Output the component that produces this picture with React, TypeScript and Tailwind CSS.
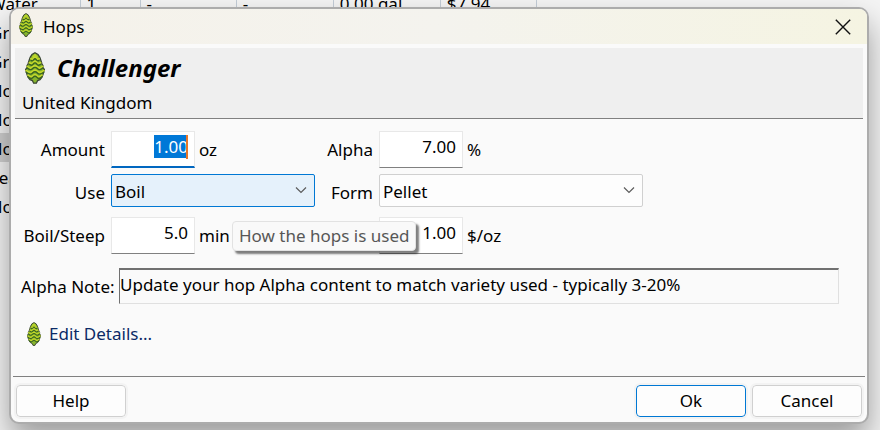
import { useEffect, useRef } from 'react';

interface HopIconProps {
	className?: string;
}

const waves = [
	'M6 8.4Q8 9.6 8.8 7.6 10 5.8 11.2 7.6 12 9.6 14 8.4',
	'M4.4 12.4Q7.4 14.2 8.2 12 10 9.8 11.8 12 12.6 14.2 15.6 12.4',
	'M2.2 16Q5.6 19 7.6 16.6 10 14.2 12.4 16.6 14.4 19 17.8 16',
	'M1.2 20.2Q5.4 23.6 7.6 21 10 18.6 12.4 21 14.6 23.6 18.8 20.2',
	'M3 24.8Q6.4 27.8 8 25.4 10 23 12 25.4 13.6 27.8 17 24.8',
];

const HopIcon = ({ className }: HopIconProps) => (
	<svg className={className} viewBox="0 0 20 32" preserveAspectRatio="none" aria-hidden="true">
		<path
			d="M10 .8 13 2.4 14.8 5.4 16 8.6 17 12 18 13.6 18 16 19.4 17.4 18.6 20.4 18 22.6 16.8 25.4 15 27.6 12.6 28.6 11.4 31.2 8.6 31.2 7.4 28.6 5 27.6 3.2 25.4 2 22.6 1.4 20.4.6 17.4 2 16 2 13.6 3 12 4 8.6 5.2 5.4 7 2.4Z"
			fill="#86b52c"
			stroke="#3b4634"
			strokeWidth="1.3"
		/>
		<g fill="none" strokeLinecap="round">
			<path d="M8 4.8 10 3 12 4.8" stroke="#b9d42a" strokeWidth="1.8" />
			{waves.map((d) => (
				<g key={d}>
					<path d={d} stroke="#c6d92a" strokeWidth="1.8" transform="translate(0 -1.6)" />
					<path d={d} stroke="#3a6420" strokeWidth="1.4" />
				</g>
			))}
		</g>
	</svg>
);

interface NumberFieldProps {
	id: string;
	value: string;
	unit: string;
	active?: boolean;
}

const NumberField = ({ id, value, unit, active }: NumberFieldProps) => {
	const ref = useRef<HTMLInputElement>(null);

	useEffect(() => {
		if (active) {
			ref.current?.focus();
			ref.current?.select();
		}
	}, [active]);

	return (
		<div className="flex items-start gap-1">
			<span className="relative">
				<input
					ref={ref}
					id={id}
					defaultValue={value}
					className={`block h-[37px] w-[84px] border border-[#e8e8e8] bg-white pt-0.5 pb-2 pr-1.5 text-right leading-6 outline-none selection:bg-[#0078d7] selection:text-white ${
						active ? 'border-b-2 border-b-[#0067c0]' : 'border-b-[#808080]'
					}`}
				/>
				{active && <span className="absolute top-1 right-[7px] h-6 w-0.5 bg-[#e8772a]" />}
			</span>
			<label htmlFor={id} className="pt-[7px]">
				{unit}
			</label>
		</div>
	);
};

interface SelectFieldProps {
	id: string;
	options: string[];
	active?: boolean;
}

const SelectField = ({ id, options, active }: SelectFieldProps) => (
	<div className="relative">
		<select
			id={id}
			className={`block h-[33px] w-full appearance-none rounded-xs border px-[3px] pt-0.5 outline-none ${
				active ? 'border-[#0078d4] bg-[#e5f1fb]' : 'border-[#d0d0d0] bg-[#fdfdfd]'
			}`}
		>
			{options.map((option) => (
				<option key={option}>{option}</option>
			))}
		</select>
		<svg className="pointer-events-none absolute top-3 right-2 h-2 w-3" viewBox="0 0 12 8" fill="none" stroke="#5c5c5c" strokeWidth="1.2">
			<path d="M1 1.5 6 6.5 11 1.5" />
		</svg>
	</div>
);

const rows = [
	['Water', '1', '-', '-', '0.00 gal', '$7.94'],
	['Grain'],
	['Grain'],
	['Hops'],
	['Hops'],
	['Hops'],
	['Yeast'],
	['Hops'],
	[],
	[],
	[],
	[],
	[],
	[],
	[],
];

const IngredientTable = () => (
	<table className="-mt-[12px] w-[537px] table-fixed border-collapse">
		<colgroup>
			<col className="w-[80px]" />
			<col className="w-[60px]" />
			<col className="w-[96px]" />
			<col className="w-[97px]" />
			<col className="w-[107px]" />
			<col className="w-[96px]" />
		</colgroup>
		<tbody>
			{rows.map((row, i) => (
				<tr key={i} className={i === 5 ? 'bg-[#d0d0d0]' : ''}>
					{[0, 1, 2, 3, 4, 5].map((col) => (
						<td key={col} className={`h-[29px] border-r border-[#c3ccd6] p-0 pt-0.5 leading-6 whitespace-nowrap ${col === 0 ? '' : 'pl-1.5'}`}>
							<span className={col === 0 ? '-ml-2.5' : ''}>{row[col]}</span>
						</td>
					))}
				</tr>
			))}
		</tbody>
	</table>
);

const buttonStyle = 'h-8 w-[110px] rounded border bg-[#fdfdfd] outline-2 outline-[#f3f3f3]';

const App = () => {
	return (
		<main className="relative h-screen overflow-hidden bg-[#f4f4f4] font-['Noto_Sans',sans-serif] text-[17px] leading-6 text-black">
			<IngredientTable />
			<div className="absolute inset-0 flex pt-[7px] pr-[11px] pb-1.5 pl-[9px]">
				<section
					role="dialog"
					aria-labelledby="title"
					className="flex flex-1 flex-col overflow-hidden rounded-[10px] border-2 border-[#acacac] bg-[#fafafa] shadow-[0_16px_30px_rgba(0,0,0,0.36)]"
				>
					<header className="flex h-[35px] shrink-0 items-center gap-2.5 bg-linear-to-r from-[#f5f2ea] via-[#f4f3ee] to-[#f5f4e2] pr-4 pl-2">
						<HopIcon className="mb-1 h-6 w-3.5" />
						<h1 id="title" className="flex-1">
							Hops
						</h1>
						<button aria-label="Close">
							<svg className="size-4" viewBox="0 0 16 16" stroke="#111" strokeWidth="1.4">
								<path d="M.8.8 15.2 15.2M15.2.8.8 15.2" />
							</svg>
						</button>
					</header>

					<div className="mx-1 mt-1 border-b border-[#808080] bg-[#efefef] px-[7px] pt-1 pb-[3px]">
						<div className="flex h-8 items-center gap-3 pl-[3px]">
							<HopIcon className="h-8 w-5" />
							<h2 className="text-2xl font-bold italic">Challenger</h2>
						</div>
						<p className="pt-[7px]">United Kingdom</p>
					</div>

					<form className="flex flex-1 flex-col" onSubmit={(e) => e.preventDefault()}>
						<div className="relative mx-2.5 mt-3 grid auto-rows-[37px] grid-cols-[84px_204px_52px_264px] gap-1.5">
							<label htmlFor="amount" className="pt-[7px] text-right">
								Amount
							</label>
							<NumberField id="amount" value="1.00" unit="oz" active />
							<label htmlFor="alpha" className="pt-[7px] text-right">
								Alpha
							</label>
							<NumberField id="alpha" value="7.00" unit="%" />

							<label htmlFor="use" className="pt-[7px] text-right">
								Use
							</label>
							<SelectField id="use" options={['Boil', 'Dry Hop', 'Mash']} active />
							<label htmlFor="form" className="pt-[7px] text-right">
								Form
							</label>
							<SelectField id="form" options={['Pellet', 'Leaf', 'Plug']} />

							<label htmlFor="time" className="pt-[7px] text-right">
								Boil/Steep
							</label>
							<NumberField id="time" value="5.0" unit="min" />
							<label htmlFor="price" className="pt-[7px] text-right">
								Price
							</label>
							<NumberField id="price" value="1.00" unit="$/oz" />

							<div
								role="tooltip"
								className="absolute top-[90px] left-[211px] rounded border border-[#e2e2e2] bg-[#f9f9f9] px-1.5 py-0.5 whitespace-nowrap text-[#575757] shadow-[3px_3px_2px_rgba(0,0,0,0.5)]"
							>
								How the hops is used
							</div>
						</div>

						<div className="mx-2.5 mt-3.5 flex gap-1">
							<label htmlFor="note" className="w-[94px] pt-[7px] whitespace-nowrap">
								Alpha Note:
							</label>
							<input
								id="note"
								defaultValue="Update your hop Alpha content to match variety used - typically 3-20%"
								className="mr-[18px] h-9 flex-1 border border-t-2 border-[#e0e0e0] border-t-[#707070] border-l-[#707070] bg-transparent pb-1 outline-none"
							/>
						</div>

						<a href="#details" className="mx-4 mt-[18px] flex items-center gap-2 self-start text-[#0b2a66]">
							<HopIcon className="h-6 w-3.5" />
							Edit Details...
						</a>

						<footer className="mx-0.5 mt-auto flex gap-1.5 border-t border-[#808080] px-[3px] pt-2 pb-[5px]">
							<button type="button" className={`${buttonStyle} mr-auto border-[#d0d0d0]`}>
								Help
							</button>
							<button className={`${buttonStyle} border-[#0078d4]`}>Ok</button>
							<button type="button" className={`${buttonStyle} border-[#d0d0d0]`}>
								Cancel
							</button>
						</footer>
					</form>
				</section>
			</div>
		</main>
	);
};

export default App;
